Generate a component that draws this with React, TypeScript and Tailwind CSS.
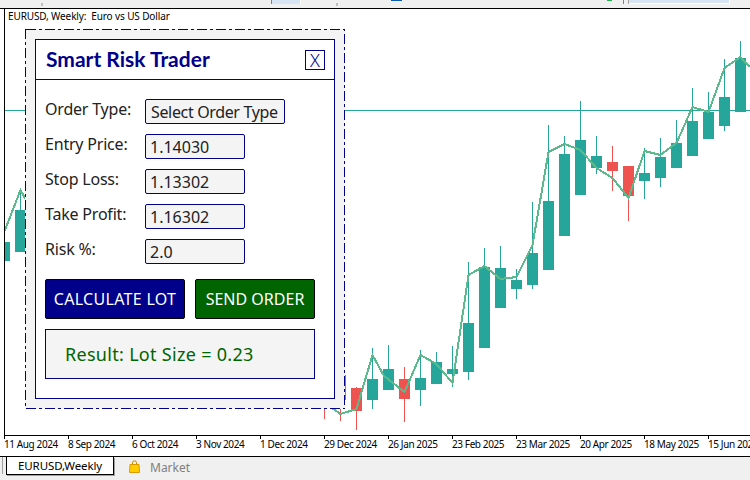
import React from 'react';

// x = centre, top/bottom = body, high/low = wick (page pixels)
type Candle = { x: number; top: number; bottom: number; high: number; low: number; red?: boolean };

const candles: Candle[] = [
   { x: 4.5, top: 242, bottom: 261, high: 228, low: 261 },
   { x: 20.5, top: 210, bottom: 252, high: 190, low: 252 },
   { x: 324.5, top: 350, bottom: 395, high: 340, low: 419, red: true },
   { x: 340.5, top: 375, bottom: 400, high: 370, low: 421, red: true },
   { x: 356.5, top: 388, bottom: 411, high: 387, low: 430, red: true },
   { x: 372.5, top: 379, bottom: 400, high: 348, low: 409 },
   { x: 388.5, top: 369, bottom: 390, high: 345, low: 390 },
   { x: 404.5, top: 379, bottom: 399, high: 367, low: 422, red: true },
   { x: 420.5, top: 378, bottom: 390, high: 350, low: 406 },
   { x: 436.5, top: 362, bottom: 384, high: 352, low: 384 },
   { x: 452.5, top: 369, bottom: 374, high: 346, low: 387 },
   { x: 468.5, top: 323, bottom: 372, high: 262, low: 380 },
   { x: 484.5, top: 267, bottom: 348, high: 248, low: 348 },
   { x: 500.5, top: 268, bottom: 308, high: 246, low: 308 },
   { x: 516.5, top: 280, bottom: 289, high: 269, low: 299 },
   { x: 532.5, top: 253, bottom: 285, high: 202, low: 289 },
   { x: 548.5, top: 201, bottom: 270, high: 125, low: 270 },
   { x: 564.5, top: 154, bottom: 236, high: 136, low: 236 },
   { x: 580.5, top: 140, bottom: 195, high: 101, low: 195 },
   { x: 596.5, top: 156, bottom: 168, high: 136, low: 174 },
   { x: 612.5, top: 162, bottom: 171, high: 146, low: 191, red: true },
   { x: 628.5, top: 166, bottom: 196, high: 166, low: 221, red: true },
   { x: 644.5, top: 173, bottom: 181, high: 148, low: 199 },
   { x: 660.5, top: 157, bottom: 178, high: 138, low: 187 },
   { x: 676.5, top: 143, bottom: 168, high: 120, low: 168 },
   { x: 692.5, top: 121, bottom: 156, high: 88, low: 156 },
   { x: 708.5, top: 112, bottom: 139, high: 92, low: 139 },
   { x: 724.5, top: 97, bottom: 126, high: 59, low: 131 },
   { x: 740.5, top: 58, bottom: 112, high: 41, low: 112 },
];

const linePoints =
   '0,236 5,230 20.5,190 26,200 ' +
   '340.5,414 356.5,409 372.5,355 384,376 404.5,392 420.5,355 436.5,364 452.5,383 468.5,275 484.5,266 500.5,279 516.5,277 532.5,245 ' +
   '548.5,152 564.5,144 580.5,150 596.5,168 612.5,178 628.5,198 644.5,151 660.5,155 676.5,143 692.5,107 708.5,112 724.5,68 740.5,57 750,67';

const dates = [
   '11 Aug 2024',
   '8 Sep 2024',
   '6 Oct 2024',
   '3 Nov 2024',
   '1 Dec 2024',
   '29 Dec 2024',
   '26 Jan 2025',
   '23 Feb 2025',
   '23 Mar 2025',
   '20 Apr 2025',
   '18 May 2025',
   '15 Jun 2025',
];

const fields = [
   { label: 'Entry Price:', value: '1.14030' },
   { label: 'Stop Loss:', value: '1.13302' },
   { label: 'Take Profit:', value: '1.16302' },
   { label: 'Risk %:', value: '2.0' },
];

const PriceChart = () => (
   <svg viewBox="5 9 745 426" className="absolute inset-0 w-[745px] h-[426px]" shapeRendering="crispEdges">
      <line x1="0" y1="110.5" x2="750" y2="110.5" stroke="#26a69a" strokeWidth="1" />
      {candles.map(c => (
         <g key={c.x} fill={c.red ? '#ef5350' : '#26a69a'}>
            <rect x={c.x - 0.5} y={c.high} width="1" height={c.low - c.high} />
            <rect x={c.x - 5.5} y={c.top} width="11" height={c.bottom - c.top} />
         </g>
      ))}
      <polyline points={linePoints} fill="none" stroke="#5bb98c" strokeWidth="2" />
   </svg>
);

const App = () => {
   return (
      <div className="w-[750px] h-[480px] flex flex-col bg-[#f0f0f0] overflow-hidden font-['Noto_Sans',sans-serif]">
         {/* leftovers of the terminal toolbar */}
         <div className="h-2 flex items-start">
            <div className="ml-[41px] mt-[3px] w-[2px] h-[3px] bg-[#c0c0c0]" />
            <div className="ml-[228px] w-px h-1 bg-[#808080]" />
            <div className="w-[29px] h-1 bg-[#d6e4f3] border-r border-white" />
            <div className="ml-[35px] mt-[3px] w-[2px] h-[3px] bg-[#c0c0c0]" />
            <div className="ml-[53px] w-[11px] h-[1px] bg-[#0a5ba8]" />
            <div className="ml-[205px] w-[5px] h-[1px] bg-[#22b14c]" />
            <div className="ml-[11px] w-px h-1 bg-[#808080]" />
            <div className="ml-[4px] w-px h-1 bg-[#a0a0a0]" />
            <div className="w-[101px] h-1 bg-[#d6e4f3] border-r border-b border-white" />
         </div>

         <div className="flex-1 flex flex-col bg-white border-t border-black">
            <div className="relative h-[427px] shrink-0 ml-1 border-l border-b border-black">
               <PriceChart />
               <div className="absolute left-[3px] top-[1px] text-[10px] leading-[12px] tracking-[-0.12px] text-black whitespace-pre">
                  {'EURUSD, Weekly:  Euro vs US Dollar'}
               </div>

               {/* trade panel window */}
               <div className="absolute left-[20px] top-[20px] w-[320px] h-[380px] p-[10px] bg-[#f4f4f4]">
                  <svg className="absolute inset-0 w-[320px] h-[380px]" shapeRendering="crispEdges">
                     <rect
                        x="0.5"
                        y="0.5"
                        width="319"
                        height="379"
                        fill="none"
                        stroke="#00008b"
                        strokeWidth="1"
                        strokeDasharray="10 3 3 3"
                     />
                  </svg>
                  <div className="relative h-[360px] bg-white border border-[#00008b]">
                     <div className="h-[40px] flex items-center justify-between pl-[10px] pr-[9px] border-b border-[#00008b]">
                        <span className="pb-[2px] text-[21px] font-bold text-[#00008b] font-['Lato',sans-serif]">Smart Risk Trader</span>
                        <button className="w-5 h-5 flex items-center justify-center border border-[#00008b] text-[18px] font-light leading-none text-[#00008b]">
                           X
                        </button>
                     </div>

                     <div className="pt-[19px] pl-[9px] flex flex-col">
                        <div className="flex flex-col gap-[10px]">
                           <div className="flex items-center h-[25px]">
                              <span className="w-[100px] pb-[5px] text-[16px] tracking-[-0.2px] text-[#222]">Order Type:</span>
                              <div className="w-[140px] h-[25px] pl-[5px] flex items-center bg-[#f4f4f4] border border-[#00008b] rounded-[2px] text-[16px] tracking-[-0.35px] text-[#222]">
                                 Select Order Type
                              </div>
                           </div>
                           {fields.map(f => (
                              <div key={f.label} className="flex items-center h-[25px]">
                                 <span className="w-[100px] pb-[6px] text-[16px] tracking-[-0.2px] text-[#222]">{f.label}</span>
                                 <div className="w-[100px] h-[25px] pl-[4px] flex items-center bg-[#f4f4f4] border border-[#00008b] rounded-[2px] text-[16px] text-[#222]">
                                    {f.value}
                                 </div>
                              </div>
                           ))}
                        </div>

                        <div className="mt-[15px] flex gap-[10px]">
                           <button className="w-[140px] h-[40px] bg-[#00008b] border border-black rounded-[2px] text-[16px] tracking-[0.3px] text-white">
                              CALCULATE LOT
                           </button>
                           <button className="w-[120px] h-[40px] bg-[#006400] border border-black rounded-[2px] text-[16px] text-white">
                              SEND ORDER
                           </button>
                        </div>

                        <div className="mt-[10px] w-[270px] h-[50px] pl-[19px] flex items-center bg-[#f4f4f4] border border-[#00008b] text-[18px] tracking-[0.3px] text-[#006400]">
                           Result: Lot Size = 0.23
                        </div>
                     </div>
                  </div>
               </div>
            </div>

            {/* time axis */}
            <div className="h-[20px] shrink-0 flex pl-1 overflow-hidden">
               {dates.map(d => (
                  <div key={d} className="w-16 shrink-0 flex flex-col">
                     <div className="w-px h-[3px] bg-black" />
                     <span className="text-[10px] leading-[10px] tracking-[-0.4px] text-black whitespace-nowrap">{d}</span>
                  </div>
               ))}
            </div>
         </div>

         {/* chart tabs */}
         <div className="h-[24px] shrink-0 border-t border-black flex items-start pl-[2px]">
            <div className="h-[17px] pl-[3px] border-l border-[#a0a0a0]">
               <div className="w-[108px] h-[18px] pl-[11px] flex items-center bg-white border-l border-r border-b border-black shadow-[1px_1px_0_#a0a0a0] text-[11.5px] leading-none text-black tracking-[-0.1px]">
                  EURUSD,Weekly
               </div>
            </div>
            <svg viewBox="0 0 11 13" className="ml-[15px] mt-[3px] w-[11px] h-[13px]">
               <path d="M3.500 5V2.800a2 2 0 0 1 4 0V5" fill="none" stroke="#c98a00" strokeWidth="1" />
               <path d="M1 4.500h9l.5 8h-10z" fill="#ffcc00" stroke="#d99a00" strokeWidth="1" />
            </svg>
            <span className="ml-[10px] mt-[3px] text-[12px] leading-[16px] text-[#808080]">Market</span>
         </div>
      </div>
   );
};

export default App;
